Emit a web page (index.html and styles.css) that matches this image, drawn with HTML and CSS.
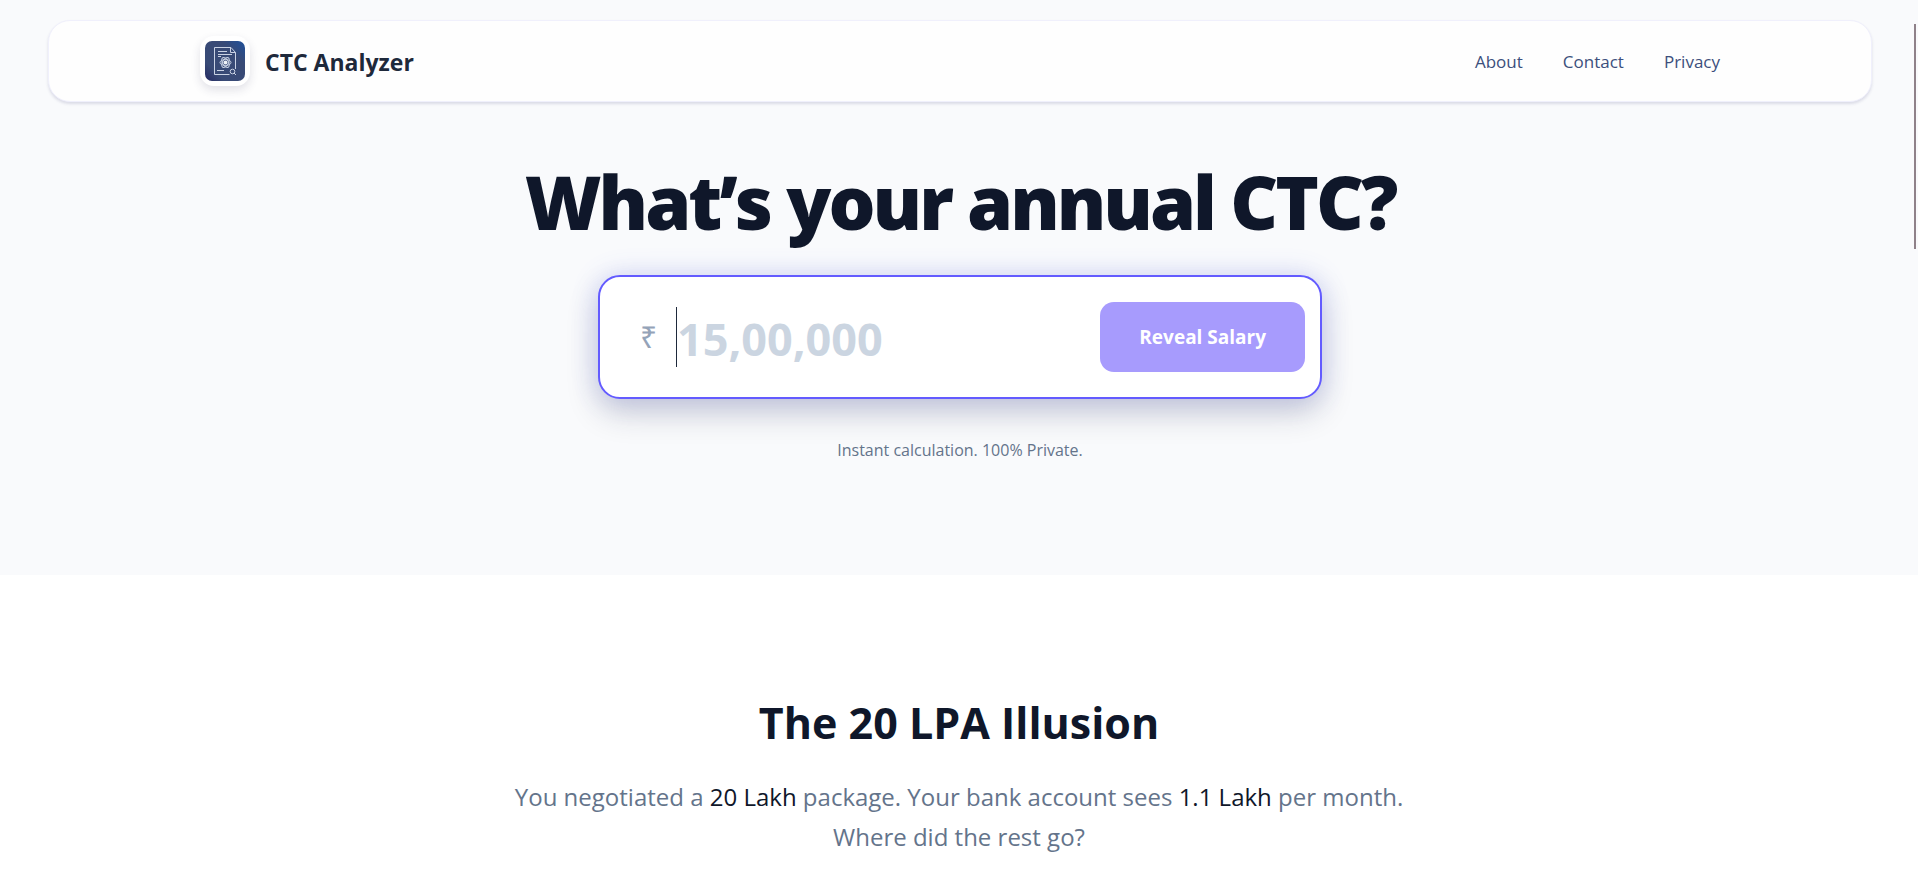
FILE: index.html
```html
<!DOCTYPE html>
<html lang="en">
<head>
<meta charset="utf-8">
<meta name="viewport" content="width=device-width, initial-scale=1">
<title>CTC Analyzer</title>
<link rel="stylesheet" href="styles.css">
</head>
<body>
<div class="hero">
  <header class="site-header">
    <div class="header-inner">
      <a class="brand" href="#">
        <span class="brand-logo">
          <svg viewBox="0 0 40 40" width="40" height="40" aria-hidden="true">
            <defs>
              <linearGradient id="logo-bg" x1="1" y1="0" x2="0" y2="1">
                <stop offset="0" stop-color="#1d509c"/>
                <stop offset=".3" stop-color="#384a76"/>
                <stop offset=".75" stop-color="#384a76"/>
                <stop offset="1" stop-color="#252a62"/>
              </linearGradient>
            </defs>
            <rect width="40" height="40" rx="7" fill="url(#logo-bg)"/>
            <g fill="none" stroke="#c9d2e4" stroke-width="1">
              <path d="M24.500 33.500H9.500V6.500H26L30.500 11.500V28"/>
              <path d="M25.500 6.500V11.500H30.500M13 10.500H22M13 13.500H27M13 15.500H16M12 29.500H19"/>
              <circle cx="27.500" cy="30.500" r="2.300"/>
              <path d="M29 32L31 34"/>
              <ellipse cx="20.500" cy="21.500" rx="5.500" ry="3"/>
              <ellipse cx="20.500" cy="21.500" rx="5.500" ry="3" transform="rotate(60 20.500 21.500)"/>
              <ellipse cx="20.500" cy="21.500" rx="5.500" ry="3" transform="rotate(120 20.500 21.500)"/>
            </g>
            <circle cx="20.500" cy="21.500" r="2" fill="#eef2f8"/>
          </svg>
        </span>
        <span class="brand-name">CTC Analyzer</span>
      </a>
      <nav class="site-nav">
        <a href="#about">About</a>
        <a href="#contact">Contact</a>
        <a href="#privacy">Privacy</a>
      </nav>
    </div>
  </header>
  <main class="hero-main">
    <h1 class="hero-title">What’s your annual CTC?</h1>
    <form class="ctc-form">
      <label class="currency" for="ctc">₹</label>
      <div class="amount">
        <input class="amount-input" id="ctc" type="text" inputmode="numeric" placeholder="15,00,000" aria-label="Annual CTC in rupees">
      </div>
      <button class="reveal" type="button">Reveal Salary</button>
    </form>
    <p class="hint">Instant calculation. 100% Private.</p>
  </main>
</div>
<section class="illusion">
  <h2 class="illusion-title">The 20 LPA Illusion</h2>
  <p class="illusion-text">You negotiated a <strong>20 Lakh</strong> package. Your bank account sees <strong>1.1 Lakh</strong> per month.<br>Where did the rest go?</p>
</section>
<div class="scroll-thumb"></div>
</body>
</html>
```
FILE: styles.css
```css
* {
  box-sizing: border-box;
}

body {
  margin: 0;
  min-height: 100vh;
  background: #ffffff;
  color: #0f172a;
  font-family: "Open Sans", "Noto Sans", sans-serif;
}

.hero {
  background: #f9fafc;
  padding: 20px 46px 113px 48px;
}

.site-header {
  border: 1px solid #f0f0fc;
  border-radius: 22px;
  background: #fefefe;
  box-shadow: 0 2px 3px rgba(60, 60, 120, 0.16);
}

.header-inner {
  display: flex;
  align-items: center;
  justify-content: space-between;
  max-width: 1520px;
  margin: 0 auto;
  padding: 15px 0;
}

.brand {
  display: flex;
  align-items: center;
  gap: 15px;
  color: #1e293b;
  text-decoration: none;
}

.brand-logo {
  display: flex;
  padding: 5px;
  border-radius: 14px;
  background: #ffffff;
  box-shadow: 0 4px 10px rgba(50, 50, 93, 0.14);
}

.brand-name {
  padding-top: 2px;
  font-size: 23px;
  font-weight: 700;
  line-height: 32px;
}

.site-nav {
  display: flex;
  gap: 40px;
  padding-top: 2px;
}

.site-nav a {
  color: #3c4f7c;
  font-size: 17px;
  line-height: 24px;
  text-decoration: none;
}

.hero-main {
  display: flex;
  flex-direction: column;
  align-items: center;
}

.hero-title {
  margin: 55px 0 28px;
  font-size: 74px;
  font-weight: 800;
  line-height: 90px;
  letter-spacing: -3px;
}

.ctc-form {
  display: flex;
  align-items: center;
  width: 100%;
  max-width: 724px;
  padding: 24px 15px;
  border: 2px solid #635bff;
  border-radius: 22px;
  background: #ffffff;
  box-shadow: 0 0 28px rgba(80, 100, 255, 0.2), 0 14px 32px rgba(30, 35, 60, 0.2);
}

.currency {
  width: 60px;
  padding-left: 25px;
  color: #94a3b8;
  font-family: "Noto Sans", sans-serif;
  font-size: 30px;
  line-height: 40px;
}

.amount {
  position: relative;
  flex: 1;
  min-width: 0;
}

.amount::before {
  content: "";
  position: absolute;
  top: 6px;
  bottom: 6px;
  left: 1px;
  width: 1px;
  background: #1e293b;
}

.amount-input {
  display: block;
  width: 100%;
  height: 72px;
  padding: 2px 0 0 2px;
  border: 0;
  outline: 0;
  background: transparent;
  color: #0f172a;
  font: inherit;
  font-size: 45px;
  font-weight: 700;
}

.amount-input::placeholder {
  color: #cbd5e1;
  opacity: 1;
}

.reveal {
  padding: 23px 39px;
  border: 0;
  border-radius: 14px;
  background: #a79bfd;
  color: #ffffff;
  font: inherit;
  font-size: 19px;
  font-weight: 700;
  line-height: 24px;
}

.hint {
  margin: 39px 0 0;
  color: #64748b;
  font-size: 16px;
  line-height: 24px;
}

.illusion {
  padding: 118px 24px 18px;
  text-align: center;
}

.illusion-title {
  margin: 0 0 24px;
  font-size: 43px;
  font-weight: 700;
  line-height: 60px;
}

.illusion-text {
  margin: 0;
  color: #64748b;
  font-size: 24px;
  line-height: 40px;
}

.illusion-text strong {
  color: #0f172a;
  font-weight: 400;
}

.scroll-thumb {
  position: absolute;
  top: 24px;
  right: 2px;
  width: 2px;
  height: 225px;
  background: #8f8189;
}
```
